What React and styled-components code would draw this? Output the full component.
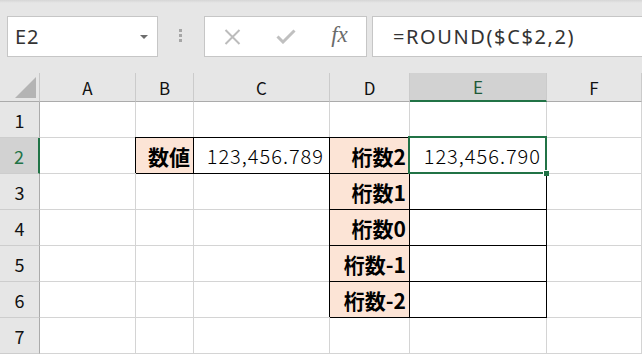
import React from "react";
import styled, { createGlobalStyle } from "styled-components";

const GlobalStyle = createGlobalStyle`
  html, body {
    margin: 0;
    padding: 0;
    background: #ffffff;
  }
  body {
    width: 642px;
    height: 354px;
    overflow: hidden;
    font-family: "Noto Sans CJK JP", "Noto Sans", sans-serif;
  }
`;

const GREEN = "#217346";
const GRID = "#d4d4d4";

const Window = styled.div`
  width: 642px;
  height: 354px;
  display: flex;
  flex-direction: column;
  overflow: hidden;
  background: #fff;
`;

const FormulaBar = styled.div`
  height: 73px;
  flex: none;
  box-sizing: border-box;
  display: flex;
  align-items: flex-start;
  padding: 16px 0 0 7px;
  background: linear-gradient(#d6d6d6, #e6e6e6 3px);
  overflow: hidden;
`;

const NameBox = styled.div`
  width: 151px;
  height: 41px;
  box-sizing: border-box;
  flex: none;
  display: flex;
  align-items: center;
  justify-content: space-between;
  padding: 0 9px 0 7px;
  background: #fff;
  border: 1px solid #c6c6c6;
  font-family: "Noto Sans", "Open Sans", sans-serif;
  font-size: 20px;
  letter-spacing: 0.8px;
  color: #333;
`;

const Grip = styled.div`
  width: 3px;
  margin: 13px 22px 0 21px;
  display: flex;
  flex-direction: column;
  gap: 2px;
  flex: none;

  span {
    display: block;
    width: 3px;
    height: 3px;
    background: #a6a6a6;
  }
`;

const ButtonBox = styled.div`
  width: 163px;
  height: 41px;
  box-sizing: border-box;
  flex: none;
  display: grid;
  grid-template-columns: 54px 54px 1fr;
  align-items: center;
  justify-items: center;
  background: #fff;
  border: 1px solid #c6c6c6;
`;

const FxLabel = styled.span`
  font-family: "Liberation Serif", "DejaVu Serif", serif;
  font-style: italic;
  font-size: 23px;
  color: #6b6b6b;
  margin-top: -3px;
`;

const FormulaInput = styled.div`
  width: 290px;
  height: 41px;
  box-sizing: border-box;
  flex: none;
  margin-left: 5px;
  display: flex;
  align-items: center;
  padding-left: 20px;
  background: #fff;
  border: 1px solid #c6c6c6;
  font-family: "Noto Sans", "Open Sans", sans-serif;
  font-size: 20px;
  letter-spacing: 1.6px;
  color: #333;
`;

const Sheet = styled.div`
  flex: 1;
  display: grid;
  grid-template-columns: 40px 96px 58px 136px 80px 137px 1fr;
  grid-template-rows: 29px repeat(7, 36px);
`;

const Corner = styled.div`
  box-sizing: border-box;
  background: #e6e6e6;
  border-right: 1px solid #c8c8c8;
  border-bottom: 1px solid #ababab;
  display: flex;
  align-items: flex-end;
  justify-content: flex-end;
  padding: 0 3px 3px 0;

  &::after {
    content: "";
    width: 0;
    height: 0;
    border-left: 21px solid transparent;
    border-bottom: 21px solid #b4b4b4;
  }
`;

const ColHead = styled.div`
  box-sizing: border-box;
  display: flex;
  align-items: center;
  justify-content: center;
  background: ${(p) => (p.$active ? "#d2d2d2" : "#e6e6e6")};
  border-right: 1px solid #cbcbcb;
  border-bottom: ${(p) => (p.$active ? `2px solid ${GREEN}` : "1px solid #ababab")};
  color: ${(p) => (p.$active ? "#1e5a38" : "#111")};
  font-size: 17px;
`;

const RowHead = styled.div`
  box-sizing: border-box;
  display: flex;
  align-items: center;
  justify-content: center;
  background: ${(p) => (p.$active ? "#d2d2d2" : "#e6e6e6")};
  border-right: ${(p) => (p.$active ? `2px solid ${GREEN}` : "1px solid #ababab")};
  border-bottom: 1px solid #cdcdcd;
  color: ${(p) => (p.$active ? GREEN : "#111")};
  font-size: 18px;
  padding-top: 1px;
`;

const Cell = styled.div`
  position: relative;
  box-sizing: border-box;
  display: flex;
  align-items: center;
  justify-content: ${(p) => (p.$right ? "flex-end" : "flex-start")};
  padding: 0 ${(p) => (p.$bold ? "3px" : "5px")} 0 5px;
  background: ${(p) => (p.$fill ? "#fce4d6" : "#fff")};
  border-right: 1px solid ${(p) => (p.$boxed ? "#000" : GRID)};
  border-bottom: 1px solid ${(p) => (p.$boxed ? "#000" : GRID)};
  box-shadow: ${(p) => (p.$boxed ? "-1px -1px 0 0 #000" : "none")};
  font-size: ${(p) => (p.$bold ? "21px" : "20px")};
  font-weight: ${(p) => (p.$bold ? 700 : 300)};
  letter-spacing: ${(p) => (p.$bold ? "0" : "1px")};
  color: #000;
  white-space: nowrap;
`;

const Selection = styled.div`
  position: absolute;
  top: -2px;
  left: -2px;
  right: -1px;
  bottom: -1px;
  border: 2px solid ${GREEN};
  z-index: 2;
  pointer-events: none;

  &::after {
    content: "";
    position: absolute;
    right: -4px;
    bottom: -4px;
    width: 5px;
    height: 5px;
    background: ${GREEN};
    border: 1px solid #fff;
    border-right: none;
    border-bottom: none;
  }
`;

const columns = ["A", "B", "C", "D", "E", "F"];

const emptyRow = [{}, {}, {}, {}, {}, {}];

const labelRow = (label) => [
  {},
  {},
  {},
  { text: label, bold: true, fill: true, boxed: true, right: true },
  { boxed: true },
  {},
];

const sheetRows = [
  emptyRow,
  [
    {},
    { text: "数値", bold: true, fill: true, boxed: true, right: true },
    { text: "123,456.789", boxed: true, right: true },
    { text: "桁数2", bold: true, fill: true, boxed: true, right: true },
    { text: "123,456.790", boxed: true, right: true, selected: true },
    {},
  ],
  ...["桁数1", "桁数0", "桁数-1", "桁数-2"].map(labelRow),
  emptyRow,
];

const CrossIcon = () => (
  <svg width="17" height="16" viewBox="0 0 17 16">
    <path d="M1.5 1 L15.5 15 M15.5 1 L1.5 15" stroke="#bcbcbc" strokeWidth="2" fill="none" />
  </svg>
);

const CheckIcon = () => (
  <svg width="20" height="15" viewBox="0 0 20 15">
    <path d="M1.5 7.5 L7 13 L18.5 1.5" stroke="#c0c0c0" strokeWidth="3" fill="none" />
  </svg>
);

const DropArrow = () => (
  <svg width="8" height="4" viewBox="0 0 8 4">
    <polygon points="0,0 8,0 4,4" fill="#6d6d6d" />
  </svg>
);

export default function App() {
  return (
    <Window>
      <GlobalStyle />
      <FormulaBar>
        <NameBox>
          <span>E2</span>
          <DropArrow />
        </NameBox>
        <Grip>
          <span />
          <span />
          <span />
        </Grip>
        <ButtonBox>
          <CrossIcon />
          <CheckIcon />
          <FxLabel>fx</FxLabel>
        </ButtonBox>
        <FormulaInput>=ROUND($C$2,2)</FormulaInput>
      </FormulaBar>
      <Sheet>
        <Corner />
        {columns.map((c) => (
          <ColHead key={c} $active={c === "E"}>
            {c}
          </ColHead>
        ))}
        {sheetRows.map((row, r) => (
          <React.Fragment key={r}>
            <RowHead $active={r === 1}>{r + 1}</RowHead>
            {row.map((cell, c) => (
              <Cell
                key={c}
                $bold={cell.bold}
                $fill={cell.fill}
                $boxed={cell.boxed}
                $right={cell.right}
              >
                {cell.text}
                {cell.selected && <Selection />}
              </Cell>
            ))}
          </React.Fragment>
        ))}
      </Sheet>
    </Window>
  );
}
